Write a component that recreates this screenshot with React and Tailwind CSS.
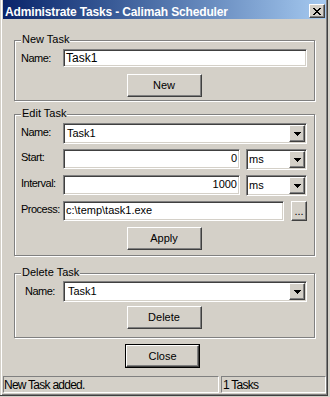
const sunken =
  "bg-white border border-t-[#808080] border-l-[#808080] border-r-white border-b-white shadow-[inset_1px_1px_0_#404040,inset_-1px_-1px_0_#d4d0c8]";
const raised =
  "bg-[#d4d0c8] border border-t-white border-l-white border-r-[#404040] border-b-[#404040] shadow-[inset_-1px_-1px_0_#808080]";

function Group({ title, className, children }) {
  return (
    <div
      className={`relative ml-[11px] w-[301px] border border-[#808080] shadow-[1px_1px_0_#ffffff,inset_1px_1px_0_#ffffff] ${className}`}
    >
      <span className="absolute left-[6px] top-[-8px] bg-[#d4d0c8] px-[1px] text-[11px] leading-[13px]">
        {title}
      </span>
      {children}
    </div>
  );
}

function Label({ children, className = "" }) {
  return (
    <div className={`w-[42px] shrink-0 text-[11px] leading-[13px] tracking-[-0.5px] ${className}`}>
      {children}
    </div>
  );
}

function Arrow() {
  return (
    <svg width="7" height="4" viewBox="0 0 7 4" shapeRendering="crispEdges">
      <rect x="0" y="0" width="7" height="1" fill="#000" />
      <rect x="1" y="1" width="5" height="1" fill="#000" />
      <rect x="2" y="2" width="3" height="1" fill="#000" />
      <rect x="3" y="3" width="1" height="1" fill="#000" />
    </svg>
  );
}

function Combo({ value, className = "" }) {
  return (
    <div className={`${sunken} h-[21px] flex p-[1px] ${className}`}>
      <div className="flex-1 min-w-0 pl-[1px] pt-[2px] text-[11px] leading-[13px] overflow-hidden whitespace-nowrap">
        {value}
      </div>
      <div className={`${raised} w-[16px] h-[17px] flex items-center justify-center`}>
        <Arrow />
      </div>
    </div>
  );
}

function Button({ children, className = "" }) {
  return (
    <div
      className={`${raised} w-[75px] h-[23px] flex items-center justify-center text-[11px] leading-[13px] ${className}`}
    >
      {children}
    </div>
  );
}

export default function App() {
  return (
    <div className="w-[330px] h-[397px] bg-[#d4d0c8] font-['Liberation_Sans',Arial,sans-serif] text-black">
      <div className="w-[328px] h-[396px] border-r border-b border-r-[#404040] border-b-[#404040] shadow-[inset_1px_0_0_#d4d0c8,inset_2px_0_0_#ffffff,inset_-1px_-1px_0_#808080] pl-[3px] pr-[1px] flex flex-col">
        {/* Title bar */}
        <div className="h-[19px] shrink-0 flex items-start bg-linear-to-r from-[#0a246a] to-[#a6caf0]">
          <div className="pl-[2px] pt-[5px] text-[12px] leading-[14px] font-bold text-white tracking-[-0.15px] whitespace-nowrap">
            Administrate Tasks - Calimah Scheduler
          </div>
          <div
            className={`${raised} ml-auto mr-[1px] mt-[4px] w-[16px] h-[14px] flex items-center justify-center`}
          >
            <svg width="8" height="7" viewBox="0 0 8 7" shapeRendering="crispEdges">
              <path d="M0 0h2v1h-2zM6 0h2v1h-2zM1 1h2v1h-2zM5 1h2v1h-2zM2 2h4v1h-4zM3 3h2v1h-2zM2 4h4v1h-4zM1 5h2v1h-2zM5 5h2v1h-2zM0 6h2v1h-2zM6 6h2v1h-2z" fill="#000" />
            </svg>
          </div>
        </div>

        {/* New Task */}
        <Group title="New Task" className="mt-[21px] h-[61px] shrink-0 pt-[8px] pl-[6px] pr-[7px]">
          <div className="flex h-[18px]">
            <Label className="pt-[3px]">Name:</Label>
            <div className={`${sunken} flex-1 flex items-center pl-[2px] text-[12px] leading-[14px]`}>
              Task1
            </div>
          </div>
          <div className="mt-[7px] flex justify-center">
            <Button>New</Button>
          </div>
        </Group>

        {/* Edit Task */}
        <Group
          title="Edit Task"
          className="mt-[13px] h-[142px] shrink-0 pt-[8px] pl-[6px] pr-[7px] flex flex-col gap-[5px]"
        >
          <div className="flex h-[21px]">
            <Label className="pt-[3px]">Name:</Label>
            <Combo value="Task1" className="flex-1 [&>div:first-child]:pl-[2px]" />
          </div>
          <div className="flex h-[21px]">
            <Label className="pt-[2px]">Start:</Label>
            <div className={`${sunken} w-[177px] h-[20px] pr-[2px] pt-[2px] text-right text-[11px] leading-[13px]`}>
              0
            </div>
            <Combo value="ms" className="ml-[6px] w-[61px]" />
          </div>
          <div className="flex h-[21px]">
            <Label className="pt-[2px]">Interval:</Label>
            <div className={`${sunken} w-[177px] h-[20px] pr-[2px] pt-[2px] text-right text-[11px] leading-[13px]`}>
              1000
            </div>
            <Combo value="ms" className="ml-[6px] w-[61px]" />
          </div>
          <div className="flex h-[21px]">
            <Label className="pt-[2px]">Process:</Label>
            <div className={`${sunken} w-[221px] h-[20px] pl-[2px] pt-[2px] text-[11px] leading-[13px] whitespace-nowrap`}>
              c:\temp\task1.exe
            </div>
            <div
              className={`${raised} ml-[7px] w-[16px] h-[20px] flex items-end justify-center pb-[3px] text-[11px] leading-[11px]`}
            >
              ...
            </div>
          </div>
          <div className="flex justify-center">
            <Button>Apply</Button>
          </div>
        </Group>

        {/* Delete Task */}
        <Group title="Delete Task" className="mt-[17px] h-[65px] shrink-0 pt-[7px] pl-[6px] pr-[7px]">
          <div className="flex h-[21px]">
            <Label className="pt-[4px] pl-[4px]">Name:</Label>
            <Combo value="Task1" className="flex-1 [&>div:first-child]:pl-[3px]" />
          </div>
          <div className="mt-[4px] flex justify-center">
            <Button>Delete</Button>
          </div>
        </Group>

        {/* Close */}
        <div className="mt-[6px] ml-[122px] w-[75px] h-[24px] shrink-0 border border-black">
          <div className={`${raised} w-full h-full flex items-center justify-center text-[11px] leading-[13px]`}>
            Close
          </div>
        </div>

        {/* Status bar */}
        <div className="mt-[8px] h-[17px] shrink-0 flex gap-[2px] text-[12px] leading-[14px] tracking-[-0.75px]">
          <div className="w-[216px] border border-t-[#808080] border-l-[#808080] border-r-white border-b-white pt-[1px] whitespace-nowrap">
            New Task added.
          </div>
          <div className="flex-1 border border-t-[#808080] border-l-[#808080] border-r-white border-b-white pt-[1px] pl-[1px] whitespace-nowrap">
            1 Tasks
          </div>
        </div>
      </div>
    </div>
  );
}
